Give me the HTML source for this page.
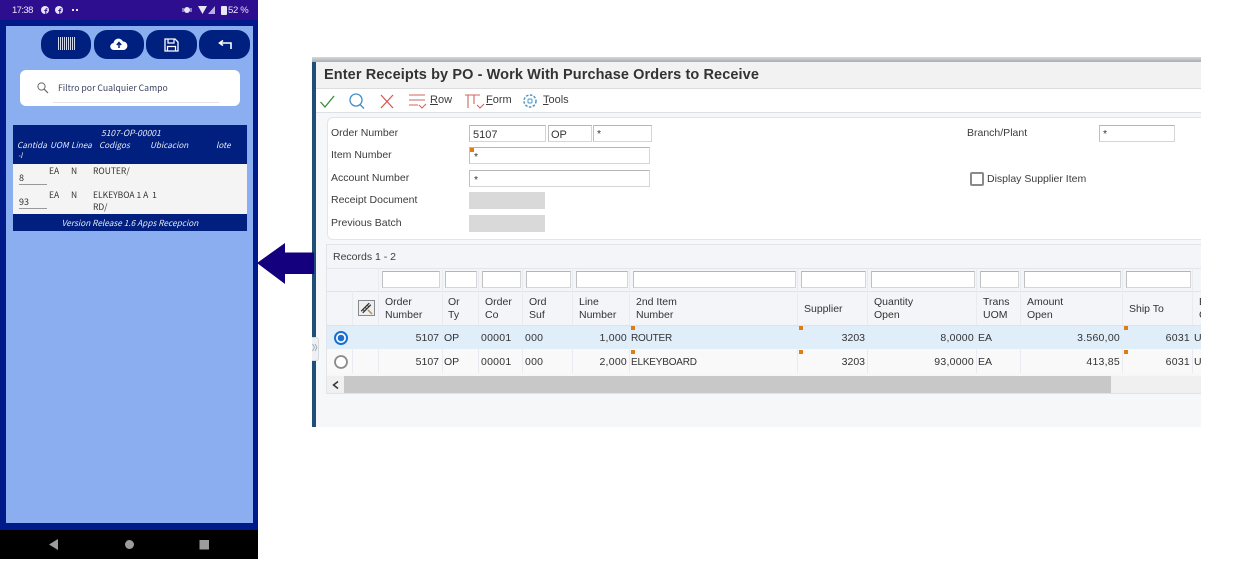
<!DOCTYPE html>
<html><head><meta charset="utf-8">
<style>
html,body{margin:0;padding:0;background:#fff}
#r{position:relative;width:1238px;height:561px;overflow:hidden;background:#fff;font-family:"Liberation Sans",sans-serif}
#r div,#r svg{position:absolute}
.t{white-space:nowrap;line-height:13px}
.p{font-family:"Noto Sans CJK JP","Liberation Sans",sans-serif;font-size:8.5px;line-height:11px;white-space:nowrap}
.e{font-size:10.5px;color:#3c3c3c;white-space:nowrap;line-height:13px}
.g{font-size:10.5px;color:#333;white-space:nowrap;line-height:13px}
.n{letter-spacing:.25px}
.u{font-size:10px;letter-spacing:-.2px}
.i{background:#fff;border:1px solid #d5d5d5;border-top-color:#b5b5b5;border-left-color:#c0c0c0;box-sizing:border-box}
.v{width:1px;background:#e8ebef}
.o{width:4px;height:4px;background:#e07b16}
</style></head><body><div id="r">

<!-- Phone -->
<div style="left:0;top:0;width:258px;height:20px;background:#2d0e8f"></div>
<div style="left:0;top:20px;width:258px;height:510px;background:#001a8a"></div>
<div style="left:6px;top:26px;width:247px;height:497px;background:#8aaeef"></div>
<div style="left:0;top:530px;width:258px;height:29px;background:#000"></div>
<div class="t" style="left:12px;top:4px;color:#e8e6f4;font-size:9.5px;letter-spacing:-.6px">17:38</div>
<svg style="left:40px;top:5px" width="40" height="10" viewBox="0 0 40 10">
<circle cx="5" cy="5" r="4" fill="#e8e6f4"/><path d="M5.800 9V4.800a1 1 0 0 1 1-1h.7M4.300 5.500h3" stroke="#2d0e8f" stroke-width="1" fill="none"/>
<circle cx="19" cy="5" r="4" fill="#e8e6f4"/><path d="M19.800 9V4.800a1 1 0 0 1 1-1h.7M18.300 5.500h3" stroke="#2d0e8f" stroke-width="1" fill="none"/>
<rect x="32" y="4" width="2" height="2" fill="#e8e6f4"/><rect x="36" y="4" width="2" height="2" fill="#e8e6f4"/>
</svg>
<svg style="left:180px;top:3px" width="50" height="15" viewBox="0 0 50 15">
<circle cx="7" cy="7" r="3" fill="#e8e6f4"/><path d="M3 5v4M11 5v4" stroke="#e8e6f4" stroke-width="1"/>
<path d="M18 3h9l-4.500 8z" fill="#e8e6f4"/>
<path d="M35 3v8h-7z" fill="#b9b3dc"/>
<rect x="41" y="3" width="6" height="9" rx="1" fill="#e8e6f4"/>
</svg>
<div class="t" style="left:228px;top:4px;color:#e8e6f4;font-size:9.5px;letter-spacing:-.3px">52 %</div>

<div style="left:41px;top:30px;width:50px;height:29px;border-radius:13px;background:#00207f"></div>
<div style="left:94px;top:30px;width:50px;height:29px;border-radius:13px;background:#00207f"></div>
<div style="left:146px;top:30px;width:51px;height:29px;border-radius:13px;background:#00207f"></div>
<div style="left:199px;top:30px;width:51px;height:29px;border-radius:13px;background:#00207f"></div>
<svg style="left:58px;top:37px" width="17" height="14" viewBox="0 0 17 14"><path d="M.5 0v13M2.500 0v13M4.500 0v13M6.500 0v13M8.500 0v13M10.500 0v13M12.500 0v13M14.500 0v13M16.500 0v13" stroke="#d3d9ec" stroke-width="1"/></svg>
<svg style="left:110px;top:37px" width="18" height="14" viewBox="0 0 18 14"><path d="M4 13a3.500 3.500 0 0 1-.5-7A5 5 0 0 1 13 4.500 4.300 4.300 0 0 1 14 13z" fill="#fff"/><path d="M9 11V6M6.800 8 9 5.500 11.200 8" stroke="#00207f" stroke-width="1.500" fill="none"/></svg>
<svg style="left:164px;top:38px" width="15" height="14" viewBox="0 0 15 14"><path d="M1 1h10l3 3v9H1z" fill="none" stroke="#fff" stroke-width="1.300"/><path d="M4 1v4h6V1M3.500 13V8.500h8V13" fill="none" stroke="#fff" stroke-width="1.200"/></svg>
<svg style="left:218px;top:40px" width="14" height="10" viewBox="0 0 14 10"><path d="M13 9V3H2M5 0.500 1.500 3 5 5.500" fill="none" stroke="#fff" stroke-width="1.600"/></svg>

<div style="left:20px;top:70px;width:220px;height:36px;border-radius:6px;background:#fff"></div>
<div style="left:53px;top:102px;width:166px;height:1px;background:#e4e4e4"></div>
<svg style="left:37px;top:82px" width="12" height="12" viewBox="0 0 12 12"><circle cx="4.500" cy="4.500" r="3.600" fill="none" stroke="#666" stroke-width="1"/><path d="M7.200 7.200 11 11" stroke="#666" stroke-width="1.200"/></svg>
<div class="p" style="left:58px;top:82px;color:#3c4260;font-size:8.7px">Filtro por Cualquier Campo</div>

<div style="left:13px;top:125px;width:234px;height:39px;background:#001f7f"></div>
<div style="left:13px;top:164px;width:234px;height:50px;background:#f4f4f4"></div>
<div style="left:13px;top:214px;width:234px;height:17px;background:#001f7f"></div>
<div class="p" style="left:101px;top:128px;color:#e6eaf5;font-style:italic">5107-OP-00001</div>
<div class="p" style="left:17px;top:140px;color:#e6eaf5;font-style:italic;font-size:8.2px">Cantida</div>
<div class="p" style="left:50px;top:140px;color:#e6eaf5;font-style:italic;font-size:8.2px">UOM</div>
<div class="p" style="left:71px;top:140px;color:#e6eaf5;font-style:italic;font-size:8.2px">Linea</div>
<div class="p" style="left:99px;top:140px;color:#e6eaf5;font-style:italic;font-size:8.2px">Codigos</div>
<div class="p" style="left:150px;top:140px;color:#e6eaf5;font-style:italic;font-size:8.2px">Ubicacion</div>
<div class="p" style="left:216px;top:140px;color:#e6eaf5;font-style:italic;font-size:8.2px">lote</div>
<div class="p" style="left:18px;top:151px;color:#e6eaf5;font-style:italic;font-size:7px">-l</div>
<div class="p" style="left:49px;top:166px;color:#333">EA</div>
<div class="p" style="left:71px;top:166px;color:#333">N</div>
<div class="p" style="left:93px;top:166px;color:#333">ROUTER/</div>
<div class="p" style="left:19px;top:172px;color:#333;font-size:9px">8</div>
<div style="left:19px;top:184px;width:28px;height:1px;background:#999"></div>
<div class="p" style="left:49px;top:190px;color:#333">EA</div>
<div class="p" style="left:71px;top:190px;color:#333">N</div>
<div class="p" style="left:93px;top:190px;color:#333">ELKEYBOA 1 A&nbsp; 1</div>
<div class="p" style="left:93px;top:202px;color:#333">RD/</div>
<div class="p" style="left:19px;top:196px;color:#333;font-size:9px">93</div>
<div style="left:19px;top:208px;width:28px;height:1px;background:#999"></div>
<div class="p" style="left:13px;width:234px;text-align:center;top:218px;color:#e6eaf5;font-style:italic;font-size:8.3px">Version Release 1.6 Apps Recepcion</div>

<!-- ERP -->
<div style="left:312px;top:57px;width:889px;height:370px;background:#f6f7f9"></div>
<div style="left:312px;top:57px;width:889px;height:5px;background:linear-gradient(#d8d8d8,#a9adb1)"></div>
<div style="left:312px;top:62px;width:4px;height:365px;background:#1f4e79"></div>
<div style="left:316px;top:62px;width:885px;height:26px;background:#f2f2f2"></div>
<div style="left:316px;top:88px;width:885px;height:25px;background:#fff;border-top:1px solid #dcdcdc;border-bottom:1px solid #dde0e4;box-sizing:border-box"></div>
<div class="t" style="left:324px;top:69px;font-size:14.5px;font-weight:bold;color:#333;letter-spacing:.1px">Enter Receipts by PO - Work With Purchase Orders to Receive</div>

<svg style="left:319px;top:93px" width="260" height="18" viewBox="0 0 260 18">
<path d="M1.500 9 6 14 15 3" fill="none" stroke="#3c8a3c" stroke-width="1.300"/>
<circle cx="37" cy="7" r="6" fill="none" stroke="#3f8fc9" stroke-width="1.300"/><path d="M41 11.500 45 15.500" stroke="#3f8fc9" stroke-width="1.300"/>
<path d="M62 2 74 15M74 2 62 15" stroke="#d9534a" stroke-width="1.200"/>
<path d="M90 2h16M90 7h16M90 12h9M100 12l3 3 4-4" fill="none" stroke="#d2665c" stroke-width="1.100"/>
<path d="M146 2h15M149 2v13M155 2v9M158 12l3 3 4-4" fill="none" stroke="#d2665c" stroke-width="1.100"/>
<circle cx="211" cy="8" r="6" fill="none" stroke="#4d94c9" stroke-width="1.500" stroke-dasharray="2.500 1.500"/><rect x="209" y="6" width="4" height="4" rx="1" fill="none" stroke="#4d94c9"/>
</svg>
<div class="e" style="left:430px;top:94px;font-size:11px"><u>R</u>ow</div>
<div class="e" style="left:486px;top:94px;font-size:11px"><u>F</u>orm</div>
<div class="e" style="left:543px;top:94px;font-size:11px"><u>T</u>ools</div>

<div style="left:327px;top:117px;width:880px;height:123px;background:#fff;border:1px solid #e2e5e9;border-radius:6px;box-sizing:border-box"></div>
<div style="left:1201px;top:57px;width:37px;height:370px;background:#fff"></div>
<div class="e" style="left:331px;top:127px">Order Number</div>
<div class="e" style="left:331px;top:149px">Item Number</div>
<div class="e" style="left:331px;top:172px">Account Number</div>
<div class="e" style="left:331px;top:194px">Receipt Document</div>
<div class="e" style="left:331px;top:217px">Previous Batch</div>
<div class="e" style="left:967px;top:127px">Branch/Plant</div>
<div class="e" style="left:987px;top:173px">Display Supplier Item</div>
<div style="left:970px;top:172px;width:14px;height:14px;border:2px solid #8a8a8a;border-radius:2px;background:#fff;box-sizing:border-box"></div>

<div class="i" style="left:469px;top:125px;width:77px;height:17px"></div>
<div class="i" style="left:548px;top:125px;width:44px;height:17px"></div>
<div class="i" style="left:593px;top:125px;width:59px;height:17px"></div>
<div class="i" style="left:469px;top:147px;width:181px;height:17px"></div>
<div class="i" style="left:469px;top:170px;width:181px;height:17px"></div>
<div class="i" style="left:1099px;top:125px;width:76px;height:17px"></div>
<div style="left:469px;top:192px;width:76px;height:17px;background:#d9d9d9"></div>
<div style="left:469px;top:215px;width:76px;height:17px;background:#d9d9d9"></div>
<div class="o" style="left:470px;top:148px"></div>
<div class="g" style="left:473px;top:129px;font-size:11px">5107</div>
<div class="g" style="left:551px;top:129px;font-size:11px">OP</div>
<div class="g" style="left:597px;top:128px">*</div>
<div class="g" style="left:474px;top:151px">*</div>
<div class="g" style="left:474px;top:174px">*</div>
<div class="g" style="left:1103px;top:128px">*</div>

<!-- Grid -->
<div style="left:326px;top:244px;width:875px;height:150px;background:#f3f5f8;border-top:1px solid #e2e5e9;box-sizing:border-box"></div>
<div style="left:326px;top:244px;width:1px;height:150px;background:#e2e5e9"></div>
<div class="e" style="left:333px;top:251px">Records 1 - 2</div>
<div style="left:326px;top:268px;width:875px;height:1px;background:#e2e5e9"></div>
<div style="left:326px;top:291px;width:875px;height:1px;background:#dfe3e8"></div>
<div style="left:327px;top:349px;width:874px;height:24px;background:#f9f9f9"></div>
<div style="left:327px;top:373px;width:874px;height:3px;background:#f6f7f9"></div>
<div style="left:327px;top:376px;width:874px;height:17px;background:#f0f0f0;border-bottom:1px solid #e2e2e2;box-sizing:content-box"></div>
<div style="left:344px;top:376px;width:767px;height:17px;background:#c8c8c8"></div>
<svg style="left:331px;top:380px" width="10" height="10" viewBox="0 0 10 10"><path d="M7 1.500 2.500 5 7 8.500" fill="none" stroke="#333" stroke-width="1.500"/></svg>

<div class="v" style="left:352px;top:291px;height:82px"></div>
<div class="v" style="left:378px;top:268px;height:105px"></div>
<div class="v" style="left:442px;top:268px;height:105px"></div>
<div class="v" style="left:478px;top:268px;height:105px"></div>
<div class="v" style="left:522px;top:268px;height:105px"></div>
<div class="v" style="left:572px;top:268px;height:105px"></div>
<div class="v" style="left:629px;top:268px;height:105px"></div>
<div class="v" style="left:797px;top:268px;height:105px"></div>
<div class="v" style="left:867px;top:268px;height:105px"></div>
<div class="v" style="left:976px;top:268px;height:105px"></div>
<div class="v" style="left:1020px;top:268px;height:105px"></div>
<div class="v" style="left:1122px;top:268px;height:105px"></div>
<div class="v" style="left:1192px;top:268px;height:105px"></div>
<div style="left:327px;top:325px;width:874px;height:24px;background:#e0eefa"></div>
<div style="left:327px;top:325px;width:874px;height:1px;background:#dfe3e8"></div>

<div class="i" style="left:382px;top:271px;width:58px;height:17px"></div>
<div class="i" style="left:445px;top:271px;width:32px;height:17px"></div>
<div class="i" style="left:482px;top:271px;width:39px;height:17px"></div>
<div class="i" style="left:526px;top:271px;width:45px;height:17px"></div>
<div class="i" style="left:576px;top:271px;width:52px;height:17px"></div>
<div class="i" style="left:633px;top:271px;width:163px;height:17px"></div>
<div class="i" style="left:801px;top:271px;width:65px;height:17px"></div>
<div class="i" style="left:871px;top:271px;width:104px;height:17px"></div>
<div class="i" style="left:980px;top:271px;width:39px;height:17px"></div>
<div class="i" style="left:1024px;top:271px;width:97px;height:17px"></div>
<div class="i" style="left:1126px;top:271px;width:65px;height:17px"></div>

<div style="left:358px;top:300px;width:17px;height:16px;background:#eee;border:1px solid #888;box-sizing:border-box"></div>
<svg style="left:359px;top:301px" width="15" height="14" viewBox="0 0 15 14"><path d="M3 11 11 3" stroke="#333" stroke-width="3.500"/><path d="M3 11 11 3" stroke="#ddd" stroke-width="1.200" stroke-dasharray="2 1"/><path d="M9 9l4 4" stroke="#a89060" stroke-width="1.500"/></svg>

<div class="g" style="left:385px;top:296px">Order</div><div class="g" style="left:385px;top:309px">Number</div>
<div class="g" style="left:448px;top:296px">Or</div><div class="g" style="left:448px;top:309px">Ty</div>
<div class="g" style="left:485px;top:296px">Order</div><div class="g" style="left:485px;top:309px">Co</div>
<div class="g" style="left:529px;top:296px">Ord</div><div class="g" style="left:529px;top:309px">Suf</div>
<div class="g" style="left:579px;top:296px">Line</div><div class="g" style="left:579px;top:309px">Number</div>
<div class="g" style="left:636px;top:296px">2nd Item</div><div class="g" style="left:636px;top:309px">Number</div>
<div class="g" style="left:804px;top:303px">Supplier</div>
<div class="g" style="left:874px;top:296px">Quantity</div><div class="g" style="left:874px;top:309px">Open</div>
<div class="g" style="left:983px;top:296px">Trans</div><div class="g" style="left:983px;top:309px">UOM</div>
<div class="g" style="left:1027px;top:296px">Amount</div><div class="g" style="left:1027px;top:309px">Open</div>
<div class="g" style="left:1129px;top:303px">Ship To</div>
<div class="g" style="left:1199px;top:296px">B</div><div class="g" style="left:1199px;top:309px">C</div>

<svg style="left:333px;top:330px" width="16" height="40" viewBox="0 0 16 40">
<circle cx="8" cy="8" r="6" fill="#fff" stroke="#1a6fd0" stroke-width="2"/><circle cx="8" cy="8" r="3.300" fill="#1a6fd0"/>
<circle cx="8" cy="32" r="6" fill="#fff" stroke="#8a8a8a" stroke-width="1.800"/>
</svg>

<div class="o" style="left:631px;top:326px"></div>
<div class="o" style="left:631px;top:350px"></div>
<div class="o" style="left:799px;top:326px"></div>
<div class="o" style="left:799px;top:350px"></div>
<div class="o" style="left:1124px;top:326px"></div>
<div class="o" style="left:1124px;top:350px"></div>

<div class="g" style="right:799px;top:332px">5107</div>
<div class="g" style="left:444px;top:332px">OP</div>
<div class="g n" style="left:481px;top:332px">00001</div>
<div class="g n" style="left:525px;top:332px">000</div>
<div class="g n" style="right:611px;top:332px">1,000</div>
<div class="g u" style="left:631px;top:332px">ROUTER</div>
<div class="g" style="right:373px;top:332px">3203</div>
<div class="g n" style="right:264px;top:332px">8,0000</div>
<div class="g" style="left:978px;top:332px">EA</div>
<div class="g n" style="right:118px;top:332px">3.560,00</div>
<div class="g n" style="right:48px;top:332px">6031</div>
<div class="g" style="left:1194px;top:332px">U</div>

<div class="g" style="right:799px;top:356px">5107</div>
<div class="g" style="left:444px;top:356px">OP</div>
<div class="g n" style="left:481px;top:356px">00001</div>
<div class="g n" style="left:525px;top:356px">000</div>
<div class="g n" style="right:611px;top:356px">2,000</div>
<div class="g u" style="left:631px;top:356px">ELKEYBOARD</div>
<div class="g" style="right:373px;top:356px">3203</div>
<div class="g n" style="right:264px;top:356px">93,0000</div>
<div class="g" style="left:978px;top:356px">EA</div>
<div class="g n" style="right:118px;top:356px">413,85</div>
<div class="g n" style="right:48px;top:356px">6031</div>
<div class="g" style="left:1194px;top:356px">U</div>

<div style="left:312px;top:337px;width:6px;height:22px;background:#eef0f3;border:1px solid #d5d8dc;border-left:0;border-radius:0 3px 3px 0"></div>
<svg style="left:312px;top:343px" width="6" height="9" viewBox="0 0 6 9"><path d="M.5 1 2.500 4.500.5 8M3 1 5 4.500 3 8" fill="none" stroke="#9aa0a8" stroke-width=".8"/></svg>
<div style="left:1201px;top:244px;width:37px;height:183px;background:#fff"></div>

<svg style="left:256px;top:242px" width="60" height="43" viewBox="0 0 60 43"><path d="M1 21 29 1v9.500h29v21.500H29v10z" fill="#14007f"/></svg>

<!-- nav -->
<svg style="left:48px;top:538px" width="165" height="14" viewBox="0 0 165 14">
<path d="M1 6.500 10 1v11z" fill="#9c9c9c"/>
<circle cx="81.500" cy="6.500" r="4.500" fill="#9c9c9c"/>
<rect x="151.500" y="2" width="9.500" height="9.500" fill="#9c9c9c"/>
</svg>
</div></body></html>
